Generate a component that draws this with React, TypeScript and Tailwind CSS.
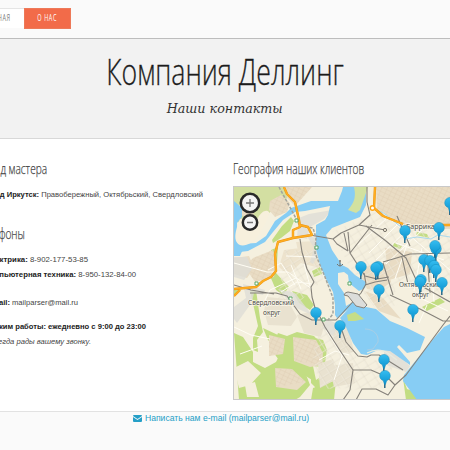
import type { ReactNode } from 'react';

const pins: [number, number][] = [
  [450, 203], [405, 231], [439, 228], [436, 249], [435, 246], [424, 260], [430, 261], [434, 266],
  [436, 270], [421, 280], [420, 282], [442, 283], [361, 267], [378, 267], [376, 268], [379, 290],
  [316, 313], [340, 326], [413, 310], [384, 360], [385, 376],
];

function Pin({ x, y }: { x: number; y: number }) {
  return (
    <g transform={`translate(${x} ${y})`}>
      <path d="M-.2 3v9" stroke="#1d5f80" strokeWidth="1.4" />
      <path d="M0-5.6a5.3 5.3 0 0 1 5.3 5.3c0 2.7-1.7 4.3-3.5 4.8L.4 8.4h-.9l-1.3-3.9C-3.6 4-5.3 2.4-5.3-.3A5.3 5.3 0 0 1 0-5.6z" fill="url(#pin)" stroke="#168cbd" strokeWidth=".5" />
    </g>
  );
}

function CityMap() {
  return (
    <svg className="block h-[213px] w-[216px]" viewBox="234 187 216 213" fill="none">
      <defs>
        <linearGradient id="pin" x1="0" y1="0" x2="0" y2="1">
          <stop offset="0" stopColor="#36bdf0" />
          <stop offset="1" stopColor="#0b94d0" />
        </linearGradient>
        <pattern id="blocks" width="5" height="4" patternUnits="userSpaceOnUse" patternTransform="rotate(25)">
          <path d="M0 0H5M0 0V4" stroke="#d6c2a6" strokeWidth=".6" />
        </pattern>
        <pattern id="lanes" width="9" height="7" patternUnits="userSpaceOnUse" patternTransform="rotate(-32)">
          <path d="M0 0H9M0 0V7" stroke="#fffdf5" strokeWidth="1" />
          <path d="M0 1H9M1 0V7" stroke="#d9d1bd" strokeWidth=".5" />
        </pattern>
      </defs>

      <path fill="#f5f0df" d="M234 187h216v213H234z" />

      {/* parks */}
      <path d="M234 187h50l4 10-8 8-11 8-7 14-9 5-10-4-9-12z" fill="#d3dfa2" />
      <g fill="#c2dd83">
        <path d="M272 240l10-14 9-9 3 4-4 10-9 7-8 5zM271 250l7-3-1 15-1 11 13 14-6 8-7-5-6-14z" />
        <path d="M312 271l8-4 2 7-8 3zM234 290l5 0-5 5z" />
        <path d="M250 290h6l4 28 3 14-6 8 1 12-5-2 0-12 5-12z" />
        <path d="M234 333l9 4 10 15v10l12 6 11-6 5-10-13-12-5-12 15 7 13 8 2 9-8 10 20 10 5 13-10 12-5 3h-56z" />
        <path d="M278 333l9 3 10-4 17 4 9 10 2 18-13 16-14-9-17-8-10-14z" />
        <path d="M292 291l15 4 7 10-4 5-11-7zM422 307l18-9 5 4-18 9zM394 243l8 3-2 3-7-3zM417 232l10 2 2 4-13-3z" />
        <path d="M311 337l12 3 4 10-2 13-13 2zM311 365l12-1 3 14-9 11-6-6zM313 388l23-8-2 20h-23zM403 378l4 11 6 2 4-3 5 7-1 5h-15z" />
      </g>
      <path d="M234 368l14-7 13 12-11 12-11 3zM245 385l10-3 4 15h-12z" fill="#f4efdc" />
      <path d="M313 366l10 1-1 9-6 4z" fill="#f4efdc" />

      {/* built-up quarters */}
      <g fill="#e9dcc4">
        <path d="M376 187h74v42l-12 0-30-3-31-13z" />
        <path d="M286 187h26l-8 9-9 10-8-8zM270 201l11-6 9 8-3 9-12 5-6-7zM237 207l14-8 5 9-4 10-12-3z" />
        <path d="M253 258l20-8 3 11-2 16-19 5-10-15z" />
        <path d="M284 250l16-2 5 11-17 16-9-8zM296 242l21-1 2 27-18-5z" fill="#ede3cd" />
        <path d="M269 335l16 4-2 15-14 2zM293 337l23 3 7 13-1 12-12 2-16-6zM275 368l17 1 14 13-9 8-21-3zM234 258l15-2 5 12-7 10-13-4z" />
        <path d="M357 267l30-3 4 18-12 9-12-2zM385 248l27 4-2 22-21 6zM365 291l18 7 18 21-22-8z" />
        <path d="M329 366l24-3 2 20-21 4zM337 322l12 8 5 22-14 1-7-17zM318 364l15-5 4 20-17 9z" fill="#e9e2d0" />
        <path d="M267 297l20 2 10 18-6 9-23-1-4-14zM297 315l16-4 12 12-4 14-17-4z" fill="#e9e2d0" />
      </g>
      <path fill="url(#blocks)" opacity=".8" d="M376 187h74v42l-42-3-31-13zM286 187h26l-8 9-9 10zM270 201l11-6 9 8-3 9-12 5zM237 207l14-8 5 9-4 10zM253 258l20-8 3 11-2 16-19 5-10-15zM269 335l16 4-2 15-14 2zM293 337l23 3 7 13-1 12-28-4zM275 368l17 1 14 13-30 5z" />
      <path fill="url(#lanes)" opacity=".85" d="M332 232l43-20 75 22v68l-60-20-42-18zM285 250h34l4 30-25 23-20-4zM322 325l20-3 17 42-6 24-32 1-9-33zM350 264l40 1 8 40-22 4-22-28zM357 357l38 7-12 24-33 2z" />

      {/* industrial ground */}
      <g fill="#dfded7" opacity=".8">
        <path d="M299 218l10-4 23-4-8 9-14 8-3 12-10-3zM307 236l10 2 2 14-6 12-3-2 4-14zM234 257l13 0 5 12-8 11-10-3zM243 284l22 6-2 5-9-2-2 9-15 21-3-4 0-12 12-9zM278 289l17 4 17 22-18-8z" />
        <path d="M384 352l7-3 19 17-4 6-22-8zM326 319l12 5-5 12-10-8z" />
      </g>

      {/* water */}
      <g fill="#87cdf4">
        <path d="M343 187h23v18l-6 12-13 5-15 6-6 7 6 15 10 15 6 3 7 7 11 7-1 6-6 3-4 13-18 14-2-3 0-10-2-13-7-13-6-14-4-16v-24l9-5 3-5 2-9-25 5-10 1-12 8-10 12-8 10-17 9-17 2v-9l10 0 15-1 10-7 9-15 11-8 5-5 20-7 27 0 4-10z" />
        <path d="M234 201l8 7 0 9-5 6 1 20 5 6-3 7-6 0z" />
        <path d="M340 318l13-14 13 3 10 2 14 12 17 7 18 9-5 13-13 3-8-8-2 2 13 15v3l-20-14-12-1-11 5-6-1-8-11-8-18z" />
        <path d="M450 324l-6 3-9 10-31 38-1 6 6 8 8 11h33z" />
      </g>
      <path d="M240 219c6-1 14 2 18-1 3-6 8-9 11-6 1 4-7 18-12 25-5 7-17 13-21 4-2-6 1-15 4-22z" fill="#f7f0dd" />
      <path d="M354 187h14l-8 23-4 3-8-3c7-8 8-14 6-23z" fill="#d2e1a0" />
      <path d="M338 273l6-1 4 3 1 8 10 8 1 7-14 8-2-13-6-9z" fill="#f5efdd" />
      <path d="M347 315l8-3 9 7-9 2-7 0z" fill="#c6dd87" />
      <path d="M365 329c9 0 14 6 13 13l-5 7-6 1" stroke="#b1cee0" strokeWidth=".8" />
      <path d="M367 353q12-6 22 1l8 6" stroke="#e8ebdf" strokeWidth="1.2" />

      {/* minor roads */}
      <g stroke="#fffdf4" strokeWidth="1">
        <path d="M234 263l33 9 21 0 24 17M268 270l13-7 14 22M234 327l17 8 19 4M263 304l7-14 26-12M240 354l22-8M291 265l10 24M304 264l6 22M286 256l32 1M281 292l16-10 15 2M319 360l16-9 14 4M326 330l17 27M334 380l9-27" />
        <path d="M358 245l31-29M369 253l31-31M376 260l35-34M386 264l36-34M395 279l15-43M414 291l8-43M434 302l-4-61M382 212l68 58M396 243l48 17M420 298l28 13M427 305l-8 18" />
      </g>

      {/* main roads */}
      <g stroke="#85817a" strokeWidth="1.1" strokeLinejoin="round">
        <path d="M300 239l2 13 5 17 7 13-3 5 1 10 5 18" />
        <path d="M310 235l23 4 8-6 18-8 11-10-3-13 0-15M333 239l4 5 11 7M344 233l4 18M348 232l2 21 15 23 12 3 12-2M350 253l22-28M359 225l26 5M366 226l20 15 20 17 12 26 32 18" />
        <path d="M234 285l17 5 23 4M250 293h26l11 3 13 18 12 6 24 0 25-27 5-9-2-11" />
        <path d="M319 315l6 12 14 22 14 21-3 20-7 10M340 325l6 17 12 14 9 1 4-2h8l24 15" />
        <path d="M353 370h18l16 7 8 8-7 10-12-6-14 0-6 11M395 385l11-10 37-50 7-9M390 295l30 14 23 12h7" />
        <path d="M365 285l10-3 12-2M383 262l27-8 40-1M383 263l10 32M402 257l6 27M427 253l3 40M397 216l13 30" />
      </g>
      <path d="M348 292l10 2 9 11-3 3-8-2-8-10-4-1q1-3 4-3z" stroke="#85817a" strokeWidth="1" fill="#dcddda" />
      <g stroke="#77736a" strokeWidth="1">
        <circle cx="385" cy="230" r="1.6" fill="#f4edd8" />
        <path d="M340 260v6m-3-2q3 4 6 0M339 261h2" />
      </g>
      <path d="M279 187l13 24 8 15 13 2 3 10-1 15 10 24 8 21 0 16-5 6" stroke="#a2a49d" strokeWidth="1.5" strokeDasharray="3 1.5" />
      <path d="M373 209q12 3 19 11l9 7M405 239l12-2 14 2 7-4 12 2" stroke="#a8d8ed" />

      {/* arterial roads */}
      <g strokeLinejoin="round">
        <path d="M284 187l3 7 8 8 4 18 1 7-7 3v8l19-3-4-8-8-2M293 238l-15 4-3 12 1 17-5 6-8 4-7 6-22 2M375 187l-1 21 9 8 20 8M440 225h10M234 296l6-6" stroke="#e89419" strokeWidth="2.4" />
        <path d="M284 187l3 7 8 8 4 18 1 7-7 3v8l19-3-4-8-8-2M293 238l-15 4-3 12 1 17-5 6-8 4-7 6-22 2M375 187l-1 21 9 8 20 8M440 225h10M234 296l6-6" stroke="#ffad1f" strokeWidth="1.7" />
        <circle cx="372.5" cy="208" r="2.2" fill="#fff" stroke="#ffa514" strokeWidth="1.4" />
      </g>

      {/* stations */}
      <g fill="#fff" stroke="#4fa35b" strokeWidth=".9">
        <path d="M295 219h3v3h-3zM315 246h3v3h-3zM255 282h3v3h-3zM348 282h3v3h-3zM289 297h3v3h-3zM322 318h3v3h-3z" />
      </g>

      <g className="font-['Noto_Sans'] text-[7.4px]" fill="#4d4d48" stroke="#faf6e9" strokeWidth="1.4" paintOrder="stroke">
        <text x="406" y="229" textLength="33" lengthAdjust="spacingAndGlyphs">Баррикад</text>
        <text x="248" y="304.5" textLength="46" lengthAdjust="spacingAndGlyphs">Свердловский</text>
        <text x="263" y="314.5" textLength="17.5" lengthAdjust="spacingAndGlyphs">округ</text>
        <text x="399" y="287" textLength="42" lengthAdjust="spacingAndGlyphs">Октябрьский</text>
        <text x="412" y="297" textLength="17" lengthAdjust="spacingAndGlyphs">округ</text>
      </g>

      {pins.map(([x, y]) => <Pin key={`${x}-${y}`} x={x} y={y} />)}

      <circle cx="250" cy="203" r="9.2" fill="#f4f4f4" stroke="#292929" strokeWidth="2.5" />
      <circle cx="250" cy="222.5" r="7.2" fill="#f4f4f4" stroke="#292929" strokeWidth="2.5" />
      <path d="M246 203h8m-4-4v8M247 222.5h6" stroke="#777" strokeWidth="1.3" />
    </svg>
  );
}

function Line({ className, children }: { className: string; children: ReactNode }) {
  return <div className={`flex h-[15px] items-center justify-end whitespace-nowrap ${className}`}><p>{children}</p></div>;
}

export default function App() {
  return (
    <div className="flex h-[450px] w-[450px] flex-col overflow-hidden bg-white font-['Liberation_Sans',sans-serif] text-[7.6px] text-[#444]">
      <nav className="flex h-[39px] shrink-0 items-start border-b border-[#bdbdbd] bg-[#fafafa] pt-2 font-['Open_Sans'] text-[8.5px] shadow-[0_1px_2px_#ccc]">
        <div className="flex h-5 w-[24px] items-center justify-end border-t border-[#e5e5e5] bg-white pr-[14px] text-[#777]">
          <span className="origin-right scale-x-[.65] tracking-[.8px]">НАЯ</span>
        </div>
        <div className="flex h-[21px] w-[47px] items-center justify-center border border-[#ed7958] bg-[#f26b49] text-white">
          <span className="scale-x-[.65] tracking-[.9px] whitespace-nowrap">О НАС</span>
        </div>
      </nav>

      <header className="flex h-[100px] shrink-0 flex-col items-center border-b border-[#d8d8d8] bg-[#f2f2f2]">
        <h1 className="mt-[9px] flex h-[48px] w-[450px] items-center justify-center font-['Open_Sans'] text-[36px] font-light whitespace-nowrap text-[#1c1c1c] [-webkit-text-stroke:0.3px_#1c1c1c]">
          <span className="scale-x-[.742]">Компания Деллинг</span>
        </h1>
        <p className="mt-[2px] flex h-5 items-center font-['DejaVu_Serif'] text-[13.5px] whitespace-nowrap text-[#333] italic">
          <span className="scale-x-[.94]">Наши контакты</span>
        </p>
      </header>

      <main className="flex h-[273px] shrink-0 border-b border-[#e2e2e2] bg-white">
        <section className="w-[233px] overflow-hidden pt-[19px]">
          <h2 className="flex h-5 w-[47px] items-center justify-end font-['Open_Sans'] text-[15px] font-light whitespace-nowrap text-[#444] [-webkit-text-stroke:0.25px_#444]"><span className="origin-right scale-x-[.675]">д мастера</span></h2>
          <Line className="mt-[9px] w-[203px]"><b className="text-[#222]">од Иркутск:</b> Правобережный, Октябрьский, Свердловский</Line>
          <h2 className="mt-[21px] flex h-5 w-[25px] items-center justify-end font-['Open_Sans'] text-[15px] font-light whitespace-nowrap text-[#444] [-webkit-text-stroke:0.25px_#444]"><span className="origin-right scale-x-[.675]">фоны</span></h2>
          <Line className="mt-[9px] w-[88px] text-[7.8px]"><b className="text-[#222]">ектрика:</b> 8-902-177-53-85</Line>
          <Line className="w-[136px] text-[7.75px]"><b className="text-[#222]">мпьютерная техника:</b> 8-950-132-84-00</Line>
          <Line className="mt-[13px] w-[78px]"><b className="text-[#222]">ail:</b> mailparser@mail.ru</Line>
          <Line className="mt-[9px] w-[146px]"><b className="text-[#222]">жим работы: ежедневно с 9:00 до 23:00</b></Line>
          <Line className="h-[14px] w-[91px]"><i>егда рады вашему звонку.</i></Line>
        </section>
        <section className="w-[217px] overflow-hidden pt-[19px]">
          <h2 className="flex h-5 items-center font-['Open_Sans'] text-[15px] font-light whitespace-nowrap text-[#444] [-webkit-text-stroke:0.25px_#444]"><span className="origin-left scale-x-[.675]">География наших клиентов</span></h2>
          <div className="mt-[8px] h-[214px] w-[217px] overflow-hidden border-y border-l border-[#c9c9c9]"><CityMap /></div>
        </section>
      </main>

      <footer className="flex h-[38px] shrink-0 items-start justify-center bg-[#fafafa] pr-2 text-[#259fc7]">
        <a className="flex h-[13px] items-center gap-[3px] text-[8.6px] whitespace-nowrap">
          <svg className="h-[7px] w-[9px]" viewBox="0 0 9 7"><path d="M1 0h7q1 0 1 1L4.5 4 0 1Q0 0 1 0zM0 2l4.5 3L9 2v4q0 1-1 1H1Q0 7 0 6z" fill="currentColor" /></svg>
          <span>Написать нам e-mail (mailparser@mail.ru)</span>
        </a>
      </footer>
    </div>
  );
}
